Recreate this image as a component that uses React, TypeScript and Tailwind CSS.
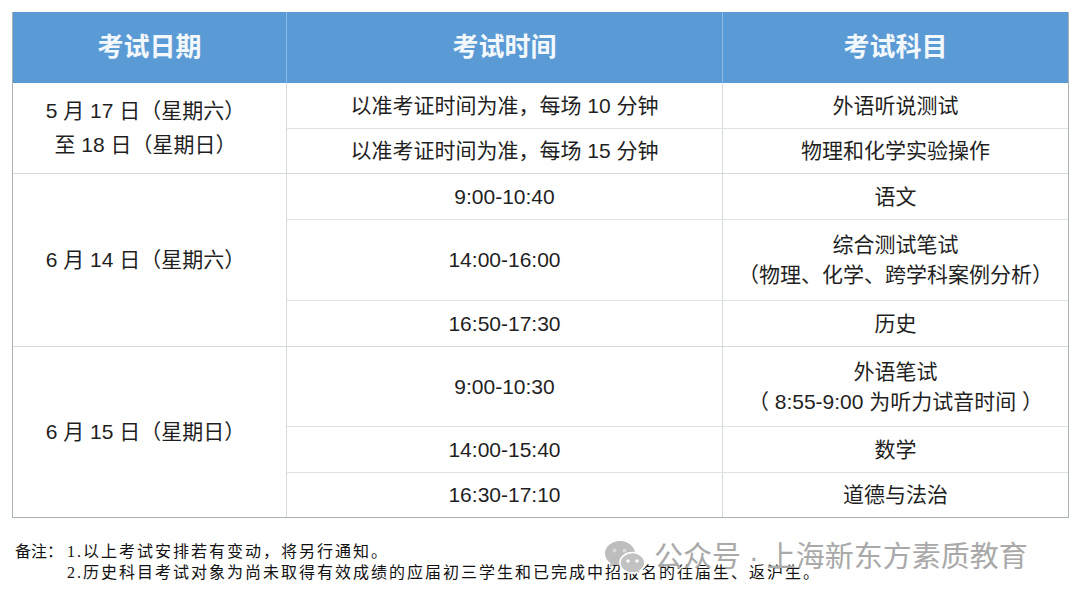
import React from 'react'

const cjk = { fontFamily: '"Liberation Sans", "Noto Sans CJK SC", sans-serif' }
const serif = { fontFamily: '"Liberation Serif", "Noto Sans CJK SC", serif' }

interface Slot {
    time: string
    subject: string[]
    h: string
}

interface Group {
    date: string[]
    slots: Slot[]
}

const groups: Group[] = [
    {
        date: ['5 月 17 日（星期六）', '至 18 日（星期日）'],
        slots: [
            { time: '以准考证时间为准，每场 10 分钟', subject: ['外语听说测试'], h: 'h-[45px]' },
            { time: '以准考证时间为准，每场 15 分钟', subject: ['物理和化学实验操作'], h: 'h-[45px]' },
        ],
    },
    {
        date: ['6 月 14 日（星期六）'],
        slots: [
            { time: '9:00-10:40', subject: ['语文'], h: 'h-[45px]' },
            { time: '14:00-16:00', subject: ['综合测试笔试', '（物理、化学、跨学科案例分析）'], h: 'h-[81px]' },
            { time: '16:50-17:30', subject: ['历史'], h: 'h-[46px]' },
        ],
    },
    {
        date: ['6 月 15 日（星期日）'],
        slots: [
            { time: '9:00-10:30', subject: ['外语笔试', '（ 8:55-9:00 为听力试音时间 ）'], h: 'h-[79px]' },
            { time: '14:00-15:40', subject: ['数学'], h: 'h-[46px]' },
            { time: '16:30-17:10', subject: ['道德与法治'], h: 'h-[45px]' },
        ],
    },
]

function WeChatIcon() {
    return (
        <svg width="42" height="34" viewBox="0 0 42 34">
            <path d="M16 1C7.7 1 1 6.6 1 13.4c0 3.9 2.2 7.3 5.6 9.6L5 28l5.6-3.2c1.7.5 3.5.8 5.4.8 8.3 0 15-5.6 15-12.2S24.3 1 16 1z" fill="#bdbdbd" />
            <circle cx="10.5" cy="10.5" r="2" fill="#d9d9d9" />
            <circle cx="20.5" cy="10.5" r="2" fill="#d9d9d9" />
            <path d="M28.5 12.5c-7 0-12.6 4.6-12.6 10.3s5.6 10.3 12.6 10.3c1.5 0 2.9-.2 4.2-.6l4.4 2.3-1.2-3.9c3-1.9 5-4.8 5-8.1 0-5.7-5.6-10.3-12.4-10.3z" fill="#c2c2c2" stroke="#ffffff" strokeWidth="1.6" />
            <circle cx="24" cy="21" r="1.7" fill="#ffffff" />
            <circle cx="33" cy="21" r="1.7" fill="#ffffff" />
        </svg>
    )
}

export default function App() {
    return (
        <div className="relative w-[1080px] h-[600px] bg-white overflow-hidden text-[#1f1f1f]" style={cjk}>
            <div className="pt-[12px] pl-[12px]">
                <div className="w-[1057px] border border-[#a9b0b6] border-t-0">
                    {/* header */}
                    <div className="flex h-[71px] bg-[#5b9bd5] text-[#f2f8fc] text-[26px] font-bold">
                        <div className="w-[274px] flex items-center justify-center border-r border-[#8ebbe3]">考试日期</div>
                        <div className="w-[436px] flex items-center justify-center border-r border-[#8ebbe3]">考试时间</div>
                        <div className="flex-1 flex items-center justify-center">考试科目</div>
                    </div>

                    {groups.map((g, gi) => (
                        <div key={gi} className={`flex ${gi > 0 ? 'border-t border-[#d5dadf]' : ''}`}>
                            <div className="w-[274px] flex flex-col items-center justify-center pr-[8px] border-r border-[#d5dadf] text-[21px] leading-[34px]">
                                {g.date.map((d, i) => <div key={i}>{d}</div>)}
                            </div>
                            <div className="flex-1 flex flex-col">
                                {g.slots.map((s, si) => (
                                    <div key={si} className={`flex ${s.h} ${si > 0 ? 'border-t border-[#dde2e6]' : ''}`}>
                                        <div className="w-[436px] flex items-center justify-center border-r border-[#d5dadf] text-[21px]">
                                            {s.time}
                                        </div>
                                        <div className="flex-1 flex flex-col items-center justify-center text-[21px] leading-[30px]">
                                            {s.subject.map((t, i) => <div key={i}>{t}</div>)}
                                        </div>
                                    </div>
                                ))}
                            </div>
                        </div>
                    ))}
                </div>
            </div>

            {/* notes */}
            <div className="mt-[23px] pl-[15px] text-[16px] leading-[21px] tracking-[2px] text-[#111] whitespace-nowrap" style={serif}>
                <div className="flex">
                    <span className="w-[52px] shrink-0 tracking-[0px]">备注：</span>
                    <span>1.以上考试安排若有变动，将另行通知。</span>
                </div>
                <div className="flex">
                    <span className="w-[52px] shrink-0"></span>
                    <span>2.历史科目考试对象为尚未取得有效成绩的应届初三学生和已完成中招报名的往届生、返沪生。</span>
                </div>
            </div>

            {/* watermark */}
            <div className="absolute left-[604px] top-[540px] flex items-center gap-[8px] text-[#a9a9a9] text-[29px] leading-none">
                <WeChatIcon />
                <span>公众号 · 上海新东方素质教育</span>
            </div>
        </div>
    )
}
